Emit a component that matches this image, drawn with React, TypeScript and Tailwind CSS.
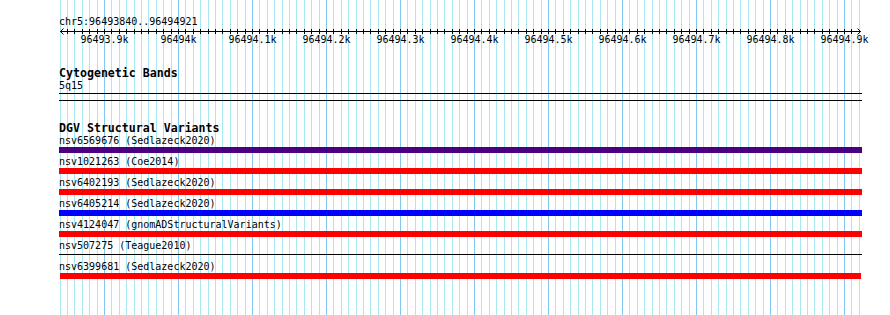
import React from "react";

const START = 96493840;
const X0 = 59.6;
const STEP = 7.4; // px per 10bp

const grid = Array.from({ length: 109 }, (_, k) => {
  const bp = START + k * 10;
  return { k, bp, x: Math.round(X0 + k * STEP), major: bp % 100 === 0 };
});

type Feat = { label: string; color?: string; line?: boolean; last?: boolean };

const feats: Feat[] = [
  { label: "nsv6569676 (Sedlazeck2020)", color: "bg-[#4b0082]" },
  { label: "nsv1021263 (Coe2014)", color: "bg-[#ff0000]" },
  { label: "nsv6402193 (Sedlazeck2020)", color: "bg-[#ff0000]" },
  { label: "nsv6405214 (Sedlazeck2020)", color: "bg-[#0000ff]" },
  { label: "nsv4124047 (gnomADStructuralVariants)", color: "bg-[#ff0000]" },
  { label: "nsv507275 (Teague2010)", line: true },
  { label: "nsv6399681 (Sedlazeck2020)", color: "bg-[#ff0000]", last: true },
];

const LEFT = 59;

export default function App() {
  return (
    <div className="relative w-[890px] h-[315px] overflow-hidden bg-white text-black font-['DejaVu_Sans_Mono',monospace]">
      {/* grid lines */}
      <div className="absolute inset-0">
        {grid.map((g) => (
          <div
            key={g.k}
            className={`absolute top-0 bottom-0 w-px ${g.major ? "bg-[#80c8f0]" : "bg-[#a8e8f0]"}`}
            style={{ left: g.x }}
          />
        ))}
      </div>

      <div className="relative flex flex-col pl-[59px] pt-[16px]">
        <div className="h-[12px] text-[10px] leading-[12px] whitespace-pre">chr5:96493840..96494921</div>

        {/* ruler */}
        <svg width={803} height={7} className="block" shapeRendering="crispEdges">
          <line x1={1} y1={3.5} x2={802} y2={3.5} stroke="#000" strokeWidth={1} />
          {grid
            .filter((g) => g.k > 0 && g.k < 108)
            .map((g) => (
              <line key={g.k} x1={g.x - LEFT + 0.5} y1={1} x2={g.x - LEFT + 0.5} y2={6} stroke="#000" strokeWidth={1} />
            ))}
          <path d="M4.5 0.5 L1.5 3.5 L4.5 6.5" fill="none" stroke="#000" strokeWidth={1} shapeRendering="auto" />
          <path d="M798.5 0.5 L801.5 3.5 L798.5 6.5" fill="none" stroke="#000" strokeWidth={1} shapeRendering="auto" />
        </svg>

        {/* tick labels */}
        <div className="relative h-[9px] text-[10px] leading-[9px]">
          {grid
            .filter((g) => g.major)
            .map((g) => (
              <span
                key={g.k}
                className="absolute top-0 -translate-x-1/2 whitespace-pre"
                style={{ left: g.x - LEFT + 0.5 }}
              >
                {`${g.bp / 1000}k`}
              </span>
            ))}
        </div>

        <div className="mt-[23px] h-[13px] text-[11.6px] leading-[13px] font-bold whitespace-pre">Cytogenetic Bands</div>
        <div className="h-[12px] text-[10px] leading-[12px] whitespace-pre">5q15</div>
        <div className="mt-[1px] h-px w-[803px] bg-black" />
        <div className="mt-[6px] h-px w-[803px] bg-black" />

        <div className="mt-[20px] h-[14px] text-[11.6px] leading-[14px] font-bold whitespace-pre">DGV Structural Variants</div>

        <div className="flex flex-col gap-[3px]">
          {feats.map((f) => (
            <div key={f.label} className="flex flex-col">
              <div className="h-[12px] text-[10px] leading-[12px] whitespace-pre">{f.label}</div>
              {f.line ? (
                <div className="h-[6px] w-[803px] pt-[2px]">
                  <div className="h-px w-full bg-black" />
                </div>
              ) : (
                <div className={`h-[6px] ${f.last ? "ml-[1px] w-[801px]" : "w-[803px]"} ${f.color}`} />
              )}
            </div>
          ))}
        </div>
      </div>
    </div>
  );
}
